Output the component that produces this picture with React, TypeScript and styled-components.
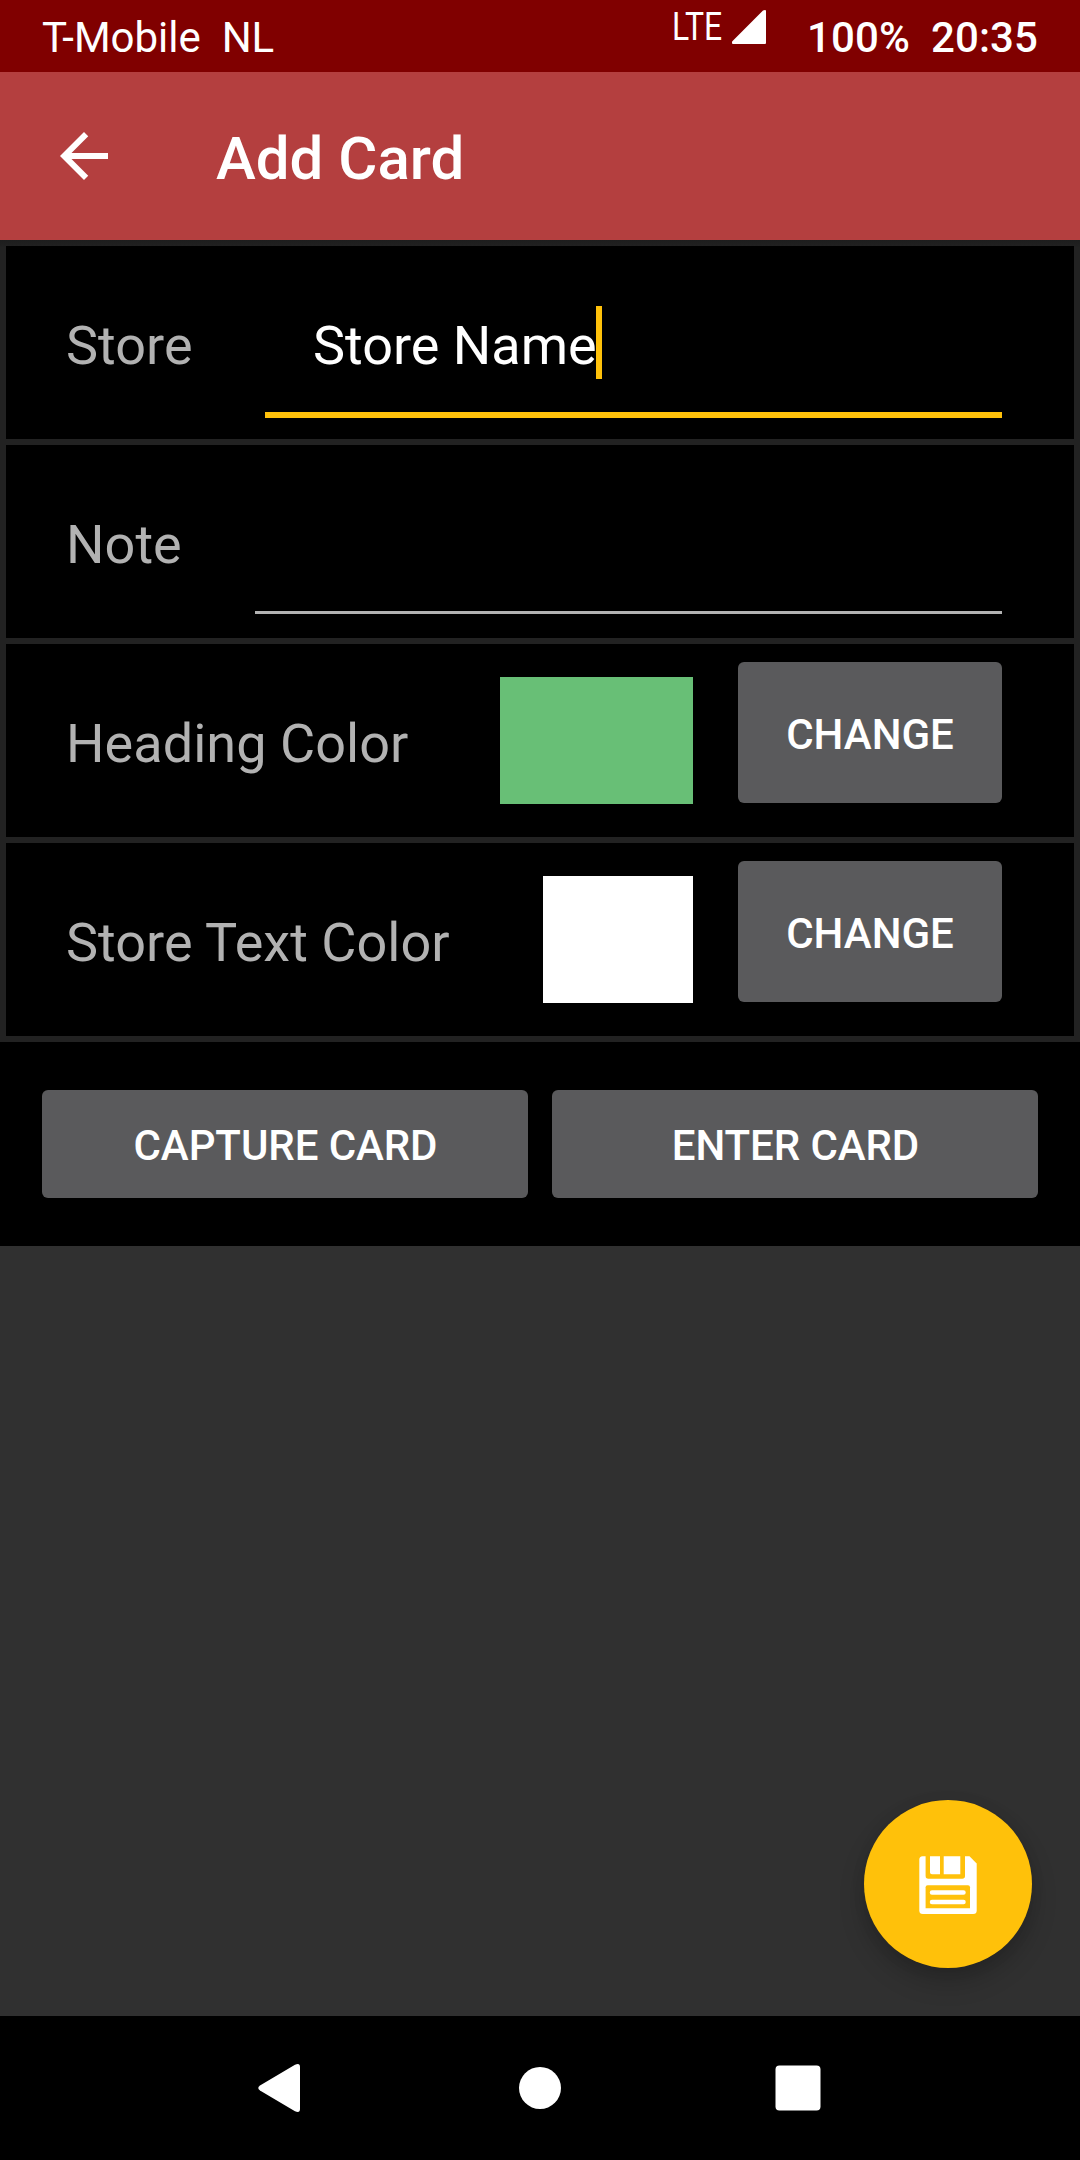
import React from "react";
import styled, { createGlobalStyle } from "styled-components";

const colors = {
  statusBar: "#800000",
  appBar: "#b43f3f",
  divider: "#222222",
  surface: "#000000",
  backdrop: "#303030",
  label: "#b2b2b2",
  accent: "#ffc10a",
  button: "#5a5a5c",
};

const GlobalStyle = createGlobalStyle`
  *, *::before, *::after { box-sizing: border-box; }
  body {
    margin: 0;
    background: ${colors.backdrop};
    font-family: Roboto, "Noto Sans", sans-serif;
  }
`;

const Screen = styled.div`
  display: flex;
  flex-direction: column;
  width: 1080px;
  height: 2160px;
  overflow: hidden;
  background: ${colors.backdrop};
  color: #fff;
`;

const StatusBar = styled.header`
  display: flex;
  flex: none;
  height: 72px;
  padding: 0 42px;
  background: ${colors.statusBar};
  font-size: 42px;
  line-height: 75px;
  white-space: pre;
`;

const Carrier = styled.span`
  flex: 1;
`;

const Network = styled.span`
  width: 60px;
  font-size: 38px;
  line-height: 54px;

  > span {
    display: inline-block;
    transform: scaleX(0.84);
    transform-origin: left;
  }
`;

const Signal = styled.svg`
  width: 34px;
  height: 34px;
  margin: 10px 41px 0 0;
`;

const StatusText = styled.span`
  font-weight: 500;
  letter-spacing: 0.09px;
`;

const AppBar = styled.div`
  display: flex;
  flex: none;
  align-items: center;
  height: 168px;
  padding-left: 48px;
  background: ${colors.appBar};
`;

const BackButton = styled.button`
  display: flex;
  padding: 0;
  border: 0;
  background: none;
  color: inherit;

  svg {
    width: 72px;
    height: 72px;
  }
`;

const Title = styled.h1`
  margin: 6px 0 0 96px;
  font-size: 60px;
  font-weight: 500;
  line-height: 72px;
`;

const Form = styled.form`
  display: grid;
  flex: none;
  grid-auto-rows: 193px;
  gap: 6px;
  padding: 6px;
  background: linear-gradient(#1d1d1d, ${colors.divider} 8px);
`;

const Row = styled.div`
  display: flex;
  padding: 0 72px 0 60px;
  background: ${colors.surface};
`;

const Label = styled.label`
  flex: 1;
  color: ${colors.label};
  font-size: 54px;
  letter-spacing: 0.04px;
  line-height: 199px;
  white-space: nowrap;
`;

const Field = styled.div<{ $width: number; $focused?: boolean }>`
  display: flex;
  align-items: flex-start;
  width: ${(p) => p.$width}px;
  height: ${(p) => (p.$focused ? 172 : 169)}px;
  padding: 60px 0 0 48px;
  border-bottom: ${(p) =>
    p.$focused ? `6px solid ${colors.accent}` : `3px solid ${colors.label}`};
  font-size: 54px;
  line-height: 79px;
`;

const Caret = styled.i`
  width: 6px;
  height: 73px;
  margin-left: -1px;
  background: ${colors.accent};
`;

const Swatch = styled.div<{ $color: string; $width: number }>`
  width: ${(p) => p.$width}px;
  height: 127px;
  margin: 33px 45px 0 0;
  background: ${(p) => p.$color};
`;

const Button = styled.button`
  padding: 3px 0 0 1px;
  border: 0;
  border-radius: 6px;
  background: ${colors.button};
  color: #fff;
  font: 500 42px/50px Roboto, "Noto Sans", sans-serif;
  letter-spacing: -0.08px;
  text-transform: uppercase;
`;

const ChangeButton = styled(Button)`
  width: 264px;
  height: 141px;
  margin-top: 18px;
  padding: 5px 0 0;
  letter-spacing: 0;
`;

const Actions = styled.div`
  display: grid;
  flex: none;
  grid-template-columns: 1fr 1fr;
  gap: 24px;
  height: 204px;
  padding: 48px 42px;
  background: ${colors.surface};
`;

const Content = styled.main`
  display: flex;
  flex: 1;
  align-items: flex-end;
  justify-content: flex-end;
  padding: 48px;
`;

const SaveButton = styled.button`
  display: flex;
  align-items: center;
  justify-content: center;
  width: 168px;
  height: 168px;
  padding: 2px 0 0;
  border: 0;
  border-radius: 50%;
  background: ${colors.accent};
  box-shadow: 0 14px 26px rgba(0, 0, 0, 0.2), 0 2px 14px rgba(0, 0, 0, 0.08);

  svg {
    width: 58px;
    height: 58px;
  }
`;

const NavBar = styled.nav`
  display: flex;
  flex: none;
  align-items: center;
  justify-content: space-between;
  height: 144px;
  padding: 0 246px;
  background: #000;

  svg {
    width: 72px;
    height: 72px;
  }
`;

export default function App() {
  return (
    <Screen>
      <GlobalStyle />
      <StatusBar>
        <Carrier>T-Mobile{"  "}NL</Carrier>
        <Network>
          <span>LTE</span>
        </Network>
        <Signal viewBox="0 0 34 34" fill="#fff">
          <path d="M31 0.6Q32 0 33 0Q34 0 34 1V33Q34 34 33 34H1Q0 34 0 33V32Q0 31.500 0.600 31Z" />
        </Signal>
        <StatusText>100%{"  "}20:35</StatusText>
      </StatusBar>

      <AppBar>
        <BackButton aria-label="Back">
          <svg viewBox="0 0 24 24" fill="currentColor">
            <path d="M20 11H7.830l5.590-5.590L12 4l-8 8 8 8 1.410-1.410L7.830 13H20z" />
          </svg>
        </BackButton>
        <Title>Add Card</Title>
      </AppBar>

      <Form>
        <Row>
          <Label>Store</Label>
          <Field $width={737} $focused>
            Store Name
            <Caret />
          </Field>
        </Row>
        <Row>
          <Label>Note</Label>
          <Field $width={747} />
        </Row>
        <Row>
          <Label>Heading Color</Label>
          <Swatch $color="#68bf76" $width={193} />
          <ChangeButton type="button">Change</ChangeButton>
        </Row>
        <Row>
          <Label>Store Text Color</Label>
          <Swatch $color="#ffffff" $width={150} />
          <ChangeButton type="button">Change</ChangeButton>
        </Row>
      </Form>

      <Actions>
        <Button>Capture Card</Button>
        <Button>Enter Card</Button>
      </Actions>

      <Content>
        <SaveButton aria-label="Save">
          <svg viewBox="0 0 58 58">
            <path d="M3.500 0.300H50.500L57.700 7.500V54.500Q57.700 58 54.200 58H3.800Q0.300 58 0.300 54.500V3.800Q0.300 0.300 3.500 0.300Z" fill="#fff" />
            <path d="M6.600 0H46V20Q46 22.700 43.300 22.700H9.300Q6.600 22.700 6.600 20Z" fill={colors.accent} />
            <path d="M11 0.300H21V18.300H13Q11 18.300 11 16.500ZM24.700 0.300H41.300V18.300H24.700Z" fill="#fff" />
            <path d="M8.600 29.300H49Q51 29.300 51 31.300V52.300H6.600V31.300Q6.600 29.300 8.600 29.300Z" fill={colors.accent} />
            <path d="M13 36.500H44.500M13 46H44.500" stroke="#fff" strokeWidth="4.500" strokeLinecap="round" />
          </svg>
        </SaveButton>
      </Content>

      <NavBar>
        <svg viewBox="0 0 72 72" fill="#fff">
          <path d="M14 33.500L49 12.700Q54 10.500 54 15V57Q54 61.500 49 59.300L14 38.500Q10.500 36 14 33.500Z" />
        </svg>
        <svg viewBox="0 0 72 72" fill="#fff">
          <circle cx="36" cy="36" r="21" />
        </svg>
        <svg viewBox="0 0 72 72" fill="#fff">
          <rect x="13.500" y="13.500" width="45" height="45" rx="4" />
        </svg>
      </NavBar>
    </Screen>
  );
}
